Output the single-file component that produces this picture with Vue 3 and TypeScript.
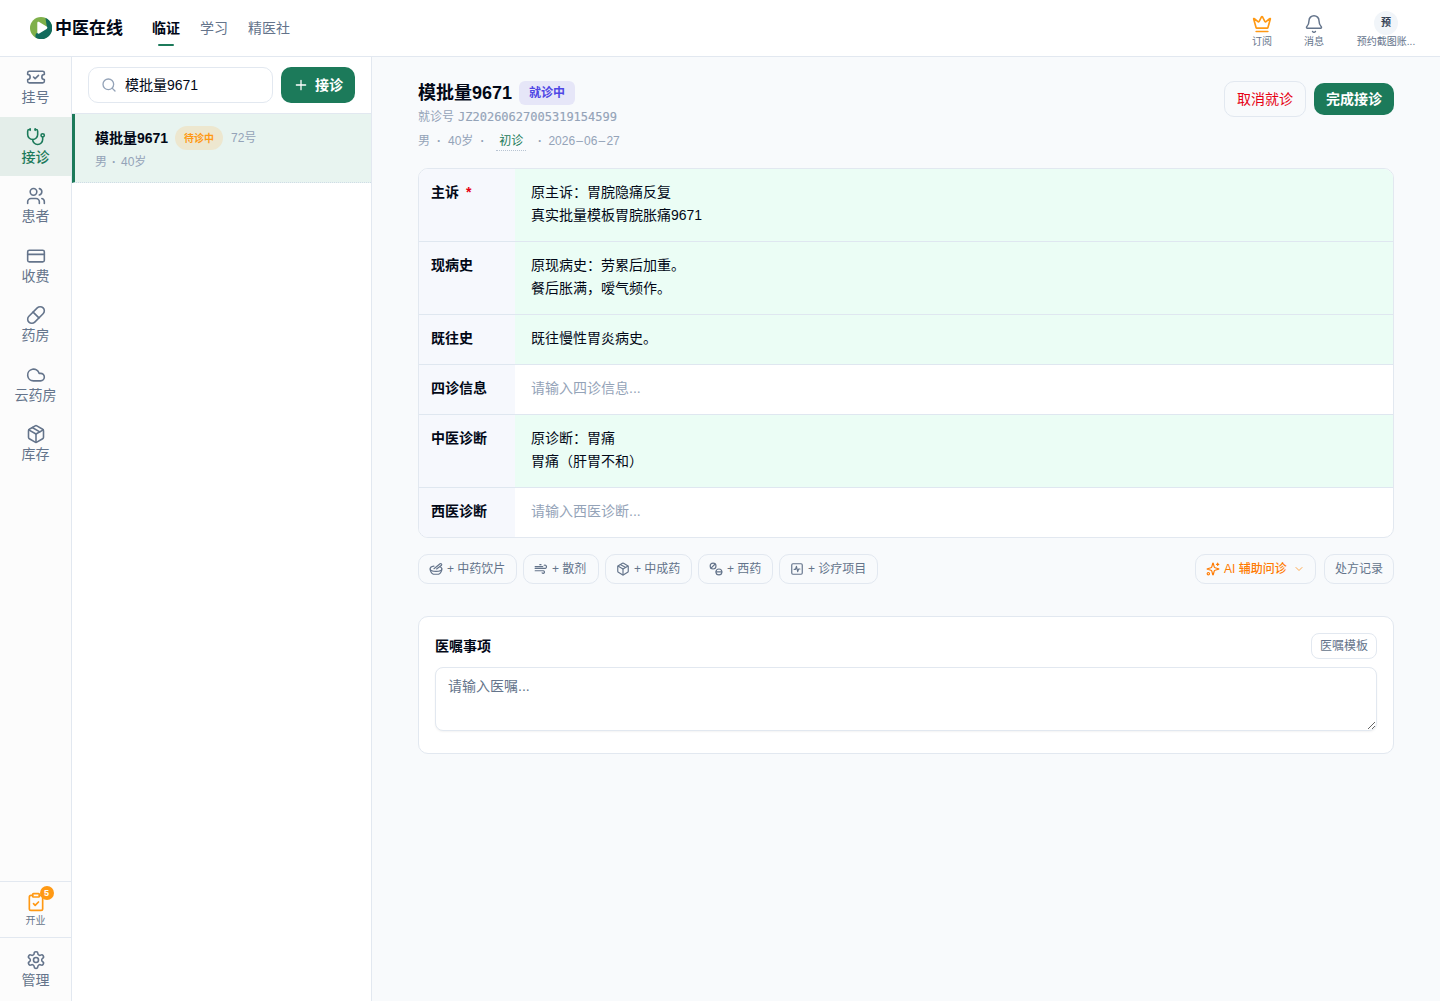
<script setup lang="ts">
import { ref } from 'vue'

interface NavItem { label: string; paths: string[] }
interface RecordRow { label: string; required?: boolean; lines: string[]; placeholder?: string }
interface Chip { label: string; width: number; paths: string[] }

const BOX = [
  'M11 21.73a2 2 0 0 0 2 0l7-4A2 2 0 0 0 21 16V8a2 2 0 0 0-1-1.73l-7-4a2 2 0 0 0-2 0l-7 4A2 2 0 0 0 3 8v8a2 2 0 0 0 1 1.73z',
  'M12 22V12', 'M3.29 7 12 12l8.71-5', 'm7.5 4.27 9 5.15',
]

const nav: NavItem[] = [
  { label: '挂号', paths: ['M2 9a3 3 0 0 1 0 6v2a2 2 0 0 0 2 2h16a2 2 0 0 0 2-2v-2a3 3 0 0 1 0-6V7a2 2 0 0 0-2-2H4a2 2 0 0 0-2 2Z', 'm9 12 2 2 4-4'] },
  { label: '接诊', paths: ['M11 2v2', 'M5 2v2', 'M5 3H4a2 2 0 0 0-2 2v4a6 6 0 0 0 12 0V5a2 2 0 0 0-2-2h-1', 'M8 15a6 6 0 0 0 12 0v-3', 'M22 10a2 2 0 1 1-4 0 2 2 0 0 1 4 0'] },
  { label: '患者', paths: ['M16 21v-2a4 4 0 0 0-4-4H6a4 4 0 0 0-4 4v2', 'M13 7a4 4 0 1 1-8 0 4 4 0 0 1 8 0', 'M22 21v-2a4 4 0 0 0-3-3.87', 'M16 3.13a4 4 0 0 1 0 7.75'] },
  { label: '收费', paths: ['M4 5h16a2 2 0 0 1 2 2v10a2 2 0 0 1-2 2H4a2 2 0 0 1-2-2V7a2 2 0 0 1 2-2Z', 'M2 10h20'] },
  { label: '药房', paths: ['m10.5 20.5 10-10a4.95 4.95 0 1 0-7-7l-10 10a4.95 4.95 0 1 0 7 7Z', 'm8.5 8.5 7 7'] },
  { label: '云药房', paths: ['M17.5 19H9a7 7 0 1 1 6.71-9h1.79a4.5 4.5 0 1 1 0 9Z'] },
  { label: '库存', paths: BOX },
]
const activeNav = ref('接诊')

const rows: RecordRow[] = [
  { label: '主诉', required: true, lines: ['原主诉：胃脘隐痛反复', '真实批量模板胃脘胀痛9671'] },
  { label: '现病史', lines: ['原现病史：劳累后加重。', '餐后胀满，嗳气频作。'] },
  { label: '既往史', lines: ['既往慢性胃炎病史。'] },
  { label: '四诊信息', lines: [], placeholder: '请输入四诊信息...' },
  { label: '中医诊断', lines: ['原诊断：胃痛', '胃痛（肝胃不和）'] },
  { label: '西医诊断', lines: [], placeholder: '请输入西医诊断...' },
]

const chips: Chip[] = [
  { label: '中药饮片', width: 99, paths: ['M2 11.5c0 4 1.8 7.5 5.500 9.500h9c3.700-2 5.500-5.500 5.500-9.500', 'M8.500 7.200C4.600 7.800 2 9.400 2 11.500c0 2.600 4.500 4.500 10 4.500s10-1.900 10-4.500c0-1.300-.9-2.300-2.500-3.100', 'M8.500 11.500 19 3a1.800 1.800 0 0 1 2.500 2.500L13 12'] },
  { label: '散剂', width: 76, paths: ['M2 8h13', 'M10 4.500h2', 'M17.500 5.500a2.700 2.700 0 1 1 2 5.500H2', 'M2 15h14a2.200 2.200 0 1 1-2 3.500'] },
  { label: '中成药', width: 87, paths: BOX },
  { label: '西药', width: 75, paths: ['M12 7a5 5 0 1 1-10 0 5 5 0 0 1 10 0', 'M22 17a5 5 0 1 1-10 0 5 5 0 0 1 10 0', 'M12 17h10', 'm3.46 10.54 7.08-7.08'] },
  { label: '诊疗项目', width: 99, paths: ['M5 3h14a2 2 0 0 1 2 2v14a2 2 0 0 1-2 2H5a2 2 0 0 1-2-2V5a2 2 0 0 1 2-2Z', 'M7 12.500h2.500l1.500-5 2.200 9 1.500-4.500H17'] },
]

const search = ref('模批量9671')
const advice = ref('')
</script>

<template>
  <div class="app">
    <header class="topbar">
      <div class="brand">
        <svg class="logo" viewBox="0 0 22 22">
          <circle cx="11" cy="11" r="11" fill="#7fb04a" />
          <path d="M15.500 1A11 11 0 1 1 5.800 20.700C4.800 18.500 6 15.500 8 15.800L17 11Z" fill="#126b5c" />
          <path d="M7.300 5.800c0-1 1-1.400 1.900-.9l7.400 4.700c1 .6 1 1.700 0 2.300l-7.400 4.600c-.9.500-1.900 0-1.900-1Z" fill="#fff" />
        </svg>
        <span>中医在线</span>
      </div>
      <nav class="tabs">
        <a class="tab on">临证</a>
        <a class="tab">学习</a>
        <a class="tab">精医社</a>
      </nav>
      <div class="tools">
        <div class="tool">
          <svg class="ic crown" viewBox="0 0 24 24"><path d="M11.562 3.266a.5.5 0 0 1 .876 0L15.390 8.870a1 1 0 0 0 1.516.294L21.183 5.500a.5.5 0 0 1 .798.519l-2.834 10.246a1 1 0 0 1-.956.734H5.810a1 1 0 0 1-.957-.734L2.020 6.020a.5.5 0 0 1 .798-.519l4.276 3.664a1 1 0 0 0 1.516-.294z" /><path d="M5 21h14" /></svg>
          <span>订阅</span>
        </div>
        <div class="tool">
          <svg class="ic" viewBox="0 0 24 24"><path d="M10.268 21a2 2 0 0 0 3.464 0" /><path d="M3.262 15.326A1 1 0 0 0 4 17h16a1 1 0 0 0 .740-1.673C19.410 13.956 18 12.499 18 8A6 6 0 0 0 6 8c0 4.499-1.411 5.956-2.738 7.326" /></svg>
          <span>消息</span>
        </div>
        <div class="tool user">
          <b class="avatar">预</b>
          <span>预约截图账...</span>
        </div>
      </div>
    </header>

    <div class="body">
      <aside class="rail">
        <a v-for="n in nav" :key="n.label" class="rail-item" :class="{ on: n.label === activeNav }" @click="activeNav = n.label">
          <svg class="ic" viewBox="0 0 24 24"><path v-for="p in n.paths" :key="p" :d="p" /></svg>
          <span>{{ n.label }}</span>
        </a>
        <div class="rail-open">
          <div class="open-ic">
            <svg class="ic" viewBox="0 0 24 24"><rect x="8" y="2" width="8" height="4" rx="1" /><path d="M16 4h2a2 2 0 0 1 2 2v14a2 2 0 0 1-2 2H6a2 2 0 0 1-2-2V6a2 2 0 0 1 2-2h2" /><path d="m9 14 2 2 4-4" /></svg>
            <i class="count">5</i>
          </div>
          <span>开业</span>
        </div>
        <a class="rail-manage">
          <svg class="ic" viewBox="0 0 24 24"><path d="M12.220 2h-.44a2 2 0 0 0-2 2v.18a2 2 0 0 1-1 1.730l-.43.25a2 2 0 0 1-2 0l-.15-.08a2 2 0 0 0-2.730.730l-.22.380a2 2 0 0 0 .730 2.730l.15.1a2 2 0 0 1 1 1.720v.510a2 2 0 0 1-1 1.740l-.15.090a2 2 0 0 0-.730 2.730l.220.380a2 2 0 0 0 2.730.730l.15-.08a2 2 0 0 1 2 0l.430.250a2 2 0 0 1 1 1.730V20a2 2 0 0 0 2 2h.440a2 2 0 0 0 2-2v-.18a2 2 0 0 1 1-1.730l.430-.25a2 2 0 0 1 2 0l.150.080a2 2 0 0 0 2.730-.730l.220-.390a2 2 0 0 0-.730-2.730l-.150-.080a2 2 0 0 1-1-1.740v-.5a2 2 0 0 1 1-1.740l.150-.090a2 2 0 0 0 .730-2.730l-.220-.380a2 2 0 0 0-2.730-.730l-.150.080a2 2 0 0 1-2 0l-.430-.250a2 2 0 0 1-1-1.730V4a2 2 0 0 0-2-2z" /><circle cx="12" cy="12" r="3" /></svg>
          <span>管理</span>
        </a>
      </aside>

      <section class="queue">
        <div class="queue-head">
          <label class="search">
            <svg class="ic" viewBox="0 0 24 24"><circle cx="11" cy="11" r="8" /><path d="m21 21-4.300-4.300" /></svg>
            <input v-model="search" />
          </label>
          <button class="add"><svg class="ic" viewBox="0 0 24 24"><path d="M5 12h14M12 5v14" /></svg>接诊</button>
        </div>
        <div class="patient">
          <div class="p-top"><b>模批量9671</b><span class="wait">待诊中</span><span class="num">72号</span></div>
          <div class="p-sub">男<i>·</i>40岁</div>
        </div>
      </section>

      <main class="main">
        <div class="visit">
          <div class="visit-info">
            <div class="v-title"><h1>模批量9671</h1><span class="badge">就诊中</span></div>
            <div class="v-no">就诊号<span class="mono">JZ20260627005319154599</span></div>
            <div class="v-meta"><span>男</span><i>·</i><span>40岁</span><i>·</i><span class="first">初诊</span><i class="after">·</i><span class="date">2026<em>–</em>06<em>–</em>27</span></div>
          </div>
          <div class="visit-act"><button class="cancel">取消就诊</button><button class="done">完成接诊</button></div>
        </div>

        <div class="record">
          <div v-for="r in rows" :key="r.label" class="row">
            <div class="r-label">{{ r.label }}<span v-if="r.required" class="req">*</span></div>
            <div class="r-val" :class="{ filled: r.lines.length }">
              <div v-for="l in r.lines" :key="l">{{ l }}</div>
              <div v-if="r.placeholder" class="ph">{{ r.placeholder }}</div>
            </div>
          </div>
        </div>

        <div class="chips">
          <button v-for="c in chips" :key="c.label" class="chip" :style="{ width: c.width + 'px' }">
            <svg class="ic" viewBox="0 0 24 24"><path v-for="p in c.paths" :key="p" :d="p" /></svg><span>+ {{ c.label }}</span>
          </button>
          <button class="chip ai">
            <svg class="ic" viewBox="0 0 24 24"><path d="M9.937 15.500A2 2 0 0 0 8.500 14.063l-6.135-1.582a.5.5 0 0 1 0-.962L8.500 9.936A2 2 0 0 0 9.937 8.500l1.582-6.135a.5.5 0 0 1 .963 0L14.063 8.500A2 2 0 0 0 15.500 9.937l6.135 1.581a.5.5 0 0 1 0 .964L15.500 14.063a2 2 0 0 0-1.437 1.437l-1.582 6.135a.5.5 0 0 1-.963 0z" /><path d="M20 2v4M22 4h-4" /><circle cx="4" cy="20" r="2" /></svg>
            <span>AI 辅助问诊</span>
            <svg class="ic chev" viewBox="0 0 24 24"><path d="m6 9 6 6 6-6" /></svg>
          </button>
          <button class="chip history">处方记录</button>
        </div>

        <div class="card">
          <div class="card-head"><h2>医嘱事项</h2><button>医嘱模板</button></div>
          <textarea v-model="advice" placeholder="请输入医嘱..."></textarea>
        </div>
      </main>
    </div>
  </div>
</template>

<style>
body { margin: 0; background: #f8fafc; }
</style>

<style scoped>
* { box-sizing: border-box; }
.app { height: 1001px; display: flex; flex-direction: column; font-family: "Liberation Sans", "Noto Sans CJK SC", sans-serif; font-size: 14px; line-height: 20px; color: #020817; overflow: hidden; }
button, input, textarea { font: inherit; margin: 0; }
button { padding: 0; border: 0; cursor: pointer; white-space: nowrap; }
h1, h2 { margin: 0; }
i, em { font-style: normal; }
.ic { width: 20px; height: 20px; fill: none; stroke: currentColor; stroke-width: 2; stroke-linecap: round; stroke-linejoin: round; flex: none; display: block; }

.topbar { height: 57px; flex: none; display: flex; align-items: center; padding: 0 24px 0 30px; background: #fff; border-bottom: 1px solid #e2e8f0; }
.brand { display: flex; align-items: center; gap: 3px; width: 122px; font-size: 17px; font-weight: 600; white-space: nowrap; }
.brand span { padding-top: 1px; }
.logo { width: 22px; height: 22px; flex: none; }
.tabs { display: flex; gap: 20px; height: 56px; }
.tab { position: relative; line-height: 56px; color: #64748b; }
.tab.on { color: #020817; font-weight: 700; }
.tab.on::after { content: ""; position: absolute; left: 6px; width: 16px; bottom: 10px; height: 2px; border-radius: 1px; background: #1c7a5a; }
.tools { margin-left: auto; display: flex; gap: 32px; height: 38px; margin-top: 4px; font-size: 10px; line-height: 14px; color: #64748b; }
.tool { display: flex; flex-direction: column; align-items: center; gap: 1px; width: 20px; white-space: nowrap; padding-top: 3px; }
.tool .ic { stroke-width: 1.75; }
.tool .crown { color: #ff9914; stroke-width: 2; }
.user { width: 60px; gap: 0; padding-top: 0; }
.avatar { width: 24px; height: 24px; border-radius: 50%; background: #f1f5f9; color: #334155; font-size: 10px; line-height: 24px; text-align: center; }

.body { flex: 1; display: flex; min-height: 0; }
.rail { width: 72px; flex: none; display: flex; flex-direction: column; background: #fcfcfc; border-right: 1px solid #e2e8f0; color: #64748b; text-align: center; }
.rail-item { height: 59.5px; flex: none; padding-top: 10px; display: flex; flex-direction: column; align-items: center; line-height: 20px; }
.rail-item .ic, .rail-manage .ic { stroke-width: 1.9; }
.rail-item.on { background: #e4eeea; color: #1c7a5a; font-weight: 500; }
.rail-open { margin-top: auto; height: 56px; border-top: 1px solid #e2e8f0; padding-top: 10px; display: flex; flex-direction: column; align-items: center; font-size: 10px; line-height: 17.5px; }
.open-ic { position: relative; color: #ff9914; }
.count { position: absolute; left: 14px; top: -6px; width: 14px; height: 14px; border-radius: 50%; background: #ff9914; color: #fff; font-size: 9px; font-weight: 700; line-height: 15px; }
.rail-manage { height: 64px; border-top: 1px solid #e2e8f0; padding-top: 12px; display: flex; flex-direction: column; align-items: center; }

.queue { width: 300px; flex: none; background: #fff; border-right: 1px solid #e2e8f0; }
.queue-head { display: flex; gap: 8px; height: 57px; padding: 10px 16px; border-bottom: 1px solid #e2e8f0; }
.search { width: 185px; height: 36px; display: flex; align-items: center; gap: 8px; padding: 0 12px; border: 1px solid #e2e8f0; border-radius: 10px; }
.search .ic { width: 16px; height: 16px; color: #94a3b8; }
.search input { width: 130px; border: 0; padding: 0; outline: 0; background: none; color: #020817; }
.add { width: 74px; height: 36px; display: flex; align-items: center; justify-content: center; gap: 6px; border-radius: 10px; background: #1c7a5a; color: #fff; font-weight: 700; }
.add .ic { width: 16px; height: 16px; stroke-width: 1.9; }
.patient { height: 69px; padding: 12px 16px 0 20px; border-left: 3px solid #1c7a5a; border-bottom: 1px dotted #cfdce6; background: #e8f4f0; }
.p-top { display: flex; align-items: center; gap: 8px; height: 24px; }
.p-top b { width: 72px; white-space: nowrap; font-weight: 600; }
.wait { width: 48px; height: 24px; border-radius: 12px; background: #ede7cf; color: #ff9914; font-size: 10px; font-weight: 700; line-height: 25px; text-align: center; }
.num, .p-sub { font-size: 12px; color: #94a3b8; }
.p-sub { line-height: 18px; margin-top: 3px; }
.p-sub i { display: inline-block; width: 14px; text-align: center; font-weight: 700; }

.main { flex: 1; padding: 24px 46px 0; background: #f8fafc; min-width: 0; }
.visit { display: flex; justify-content: space-between; height: 87px; }
.v-title { display: flex; align-items: center; gap: 8px; height: 24px; }
.v-title h1 { width: 93px; white-space: nowrap; font-size: 18px; line-height: 24px; font-weight: 600; }
.badge { width: 56px; height: 24px; border-radius: 6px; background: #e6e6f8; color: #4f46e5; font-size: 12px; font-weight: 600; line-height: 24px; text-align: center; }
.v-no, .v-meta { font-size: 12px; color: #94a3b8; }
.v-no { line-height: 18px; margin-top: 3px; height: 18px; }
.mono { margin-left: 4px; font-family: "DejaVu Sans Mono", monospace; -webkit-text-stroke: .15px currentColor; }
.v-meta { display: flex; align-items: center; height: 22px; margin-top: 4px; }
.v-meta i { width: 18px; text-align: center; font-weight: 700; }
.v-meta i:nth-of-type(2) { margin-right: 4px; }
.v-meta i + .first { margin-left: 1px; }
.first { width: 30px; height: 20px; margin-top: -1px; color: #1c7a5a; text-align: center; line-height: 20px; border-bottom: 1px dotted #b8c4d2; }
.v-meta .after { width: 22px; padding-left: 5px; }
.date em { display: inline-block; width: 9px; text-align: center; }
.visit-act { display: flex; gap: 8px; }
.cancel { width: 82px; height: 36px; border: 1px solid #e2e8f0; border-radius: 10px; background: #f8fafc; color: #e60012; }
.done { width: 80px; height: 32px; margin-top: 2px; border-radius: 10px; background: #1c7a5a; color: #fff; font-weight: 700; }

.record { border: 1px solid #e2e8f0; border-radius: 10px; overflow: hidden; background: #fff; }
.row { display: flex; line-height: 23px; border-bottom: 1px solid #dfe7f0; }
.row:last-child { border-bottom: 0; }
.r-label { width: 96px; padding: 12px 12px 0; background: #f6f8fd; font-weight: 600; }
.req { color: #e60012; margin-left: 7px; }
.r-val { flex: 1; padding: 12px 16px 14px; }
.filled { background: #ebfdf5; }
.ph { color: #94a3b8; }

.chips { display: flex; gap: 6px; margin-top: 16px; }
.chip { height: 30px; display: flex; align-items: center; padding-left: 10px; gap: 4px; border: 1px solid #e2e8f0; border-radius: 10px; background: #f8fafc; color: #64748b; font-size: 12px; line-height: 18px; }
.chip .ic { width: 14px; height: 14px; }
.ai { width: 121px; margin-left: auto; color: #ff7a00; font-weight: 500; }
.ai .chev { width: 12px; height: 12px; margin-left: 2px; color: #ffa94d; }
.history { width: 70px; margin-left: 2px; }

.card { height: 138px; margin-top: 32px; padding: 16px; border: 1px solid #e2e8f0; border-radius: 10px; background: #fff; }
.card-head { display: flex; align-items: center; justify-content: space-between; height: 26px; }
.card-head h2 { font-size: 14px; font-weight: 600; }
.card-head button { width: 66px; height: 26px; border: 1px solid #e2e8f0; border-radius: 8px; background: #fff; color: #64748b; font-size: 12px; }
textarea { display: block; width: 100%; height: 64px; margin-top: 8px; padding: 8px 12px; border: 1px solid #e2e8f0; border-radius: 8px; background: #fff; box-shadow: 0 1px 2px rgba(0, 0, 0, .05); outline: 0; resize: vertical; }
textarea::placeholder { color: #64748b; opacity: 1; }
</style>
